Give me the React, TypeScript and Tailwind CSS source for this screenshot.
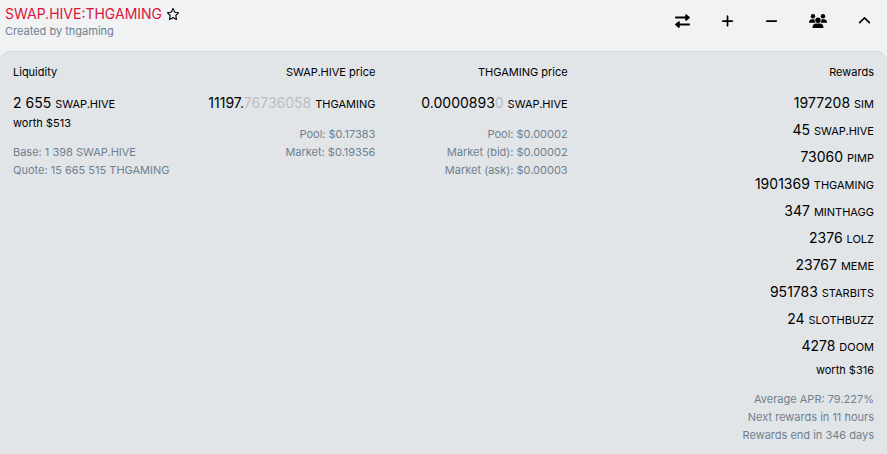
import type { ReactNode } from "react";
import { FaChevronUp, FaMinus, FaPlus, FaRegStar } from "react-icons/fa6";

interface Reward {
  amount: string;
  symbol: string;
}

const rewards: Reward[] = [
  { amount: "1977208", symbol: "SIM" },
  { amount: "45", symbol: "SWAP.HIVE" },
  { amount: "73060", symbol: "PIMP" },
  { amount: "1901369", symbol: "THGAMING" },
  { amount: "347", symbol: "MINTHAGG" },
  { amount: "2376", symbol: "LOLZ" },
  { amount: "23767", symbol: "MEME" },
  { amount: "951783", symbol: "STARBITS" },
  { amount: "24", symbol: "SLOTHBUZZ" },
  { amount: "4278", symbol: "DOOM" },
];

interface AmountProps {
  value: string;
  faded?: string;
  symbol: string;
}

function Amount({ value, faded, symbol }: AmountProps) {
  return (
    <div className="text-[14px] leading-[22px] whitespace-nowrap">
      {value}
      {faded && <span className="text-[#b9bfc5]">{faded}</span>}{" "}
      <span className="text-[11px] leading-none">{symbol}</span>
    </div>
  );
}

function Details({ lines }: { lines: string[] }) {
  return (
    <div className="mt-[11px] text-[#708090]">
      {lines.map((line) => (
        <p key={line}>{line}</p>
      ))}
    </div>
  );
}

function Column({ title, children }: { title: string; children: ReactNode }) {
  return (
    <section>
      <h2 className="mb-[11px]">{title}</h2>
      {children}
    </section>
  );
}

function IconButton({ label, children }: { label: string; children: ReactNode }) {
  return (
    <button type="button" aria-label={label} className="flex h-6 items-center">
      {children}
    </button>
  );
}

function SwapIcon() {
  return (
    <svg viewBox="0 0 15 14" className="h-[14px] w-[15px]" fill="currentColor" aria-hidden="true">
      <path d="M.8 2.5h9.4V1c0-.8.8-1.100 1.400-.6l3.100 2.600c.4.3.4.8 0 1.100l-3.100 2.600c-.6.5-1.400.1-1.400-.6V4.400H.8C.3 4.400 0 4 0 3.500s.3-1 .8-1z" />
      <path d="M14.200 9.500H4.800V8c0-.8-.8-1.100-1.400-.6L.3 10c-.4.3-.4.8 0 1.100l3.100 2.600c.6.5 1.400.1 1.400-.6v-1.700h9.400c.5 0 .8-.4.8-.9s-.3-1-.8-1z" />
    </svg>
  );
}

function UsersIcon() {
  return (
    <svg viewBox="0 0 18 14" className="h-[14px] w-[18px]" fill="currentColor" aria-hidden="true">
      <circle cx="4" cy="2.3" r="2.2" />
      <circle cx="14" cy="2.3" r="2.2" />
      <circle cx="9" cy="6.2" r="2.7" />
      <path d="M0 8.4C0 6.6 1.2 5.3 3 5.3h1.5c.4 0 .8.1 1.1.2-.2 1.3.2 2.3.9 3.2H.4c-.2 0-.4-.1-.4-.3z" />
      <path d="M18 8.4c0-1.8-1.2-3.1-3-3.1h-1.5c-.4 0-.8.1-1.1.2.2 1.3-.2 2.3-.9 3.2h6.1c.2 0 .4-.1.4-.3z" />
      <path d="M3.500 13.300c0-2.100 1.600-3.700 3.700-3.700h3.600c2.100 0 3.700 1.600 3.700 3.700 0 .4-.3.7-.7.7H4.200c-.4 0-.7-.3-.7-.7z" />
    </svg>
  );
}

export default function App() {
  return (
    <div className="flex min-h-screen flex-col bg-[#f0f2f4] font-['Inter',sans-serif] text-[11px] leading-[18px] text-black">
      <header className="flex items-start justify-between pt-1 pr-4 pb-3 pl-[5px]">
        <div>
          <div className="flex items-center gap-1">
            <a href="#pool" className="text-[14px] leading-[20px] text-[#dc143c]">
              SWAP.HIVE:THGAMING
            </a>
            <button type="button" aria-label="Add to favorites">
              <FaRegStar className="h-3 w-[14px]" />
            </button>
          </div>
          <p className="leading-[15px] text-[#708090]">Created by thgaming</p>
        </div>
        <div className="flex gap-[31px] pt-[5px]">
          <IconButton label="Swap">
            <SwapIcon />
          </IconButton>
          <IconButton label="Add liquidity">
            <FaPlus className="h-[14px] w-[13px]" />
          </IconButton>
          <IconButton label="Remove liquidity">
            <FaMinus className="h-[14px] w-[13px]" />
          </IconButton>
          <IconButton label="Liquidity providers">
            <UsersIcon />
          </IconButton>
          <IconButton label="Collapse">
            <FaChevronUp className="h-[14px] w-[13px]" />
          </IconButton>
        </div>
      </header>

      <main className="grid flex-1 grid-cols-[85fr_96fr_96fr_153fr] rounded-t-[10px] border-t border-[#d3d7da] bg-[#e1e5e8] px-[13px] pt-[11px] pb-2">
        <Column title="Liquidity">
          <Amount value="2 655" symbol="SWAP.HIVE" />
          <p>worth $513</p>
          <Details lines={["Base: 1 398 SWAP.HIVE", "Quote: 15 665 515 THGAMING"]} />
        </Column>
        <div className="text-right">
          <Column title="SWAP.HIVE price">
            <Amount value="11197." faded="76736058" symbol="THGAMING" />
            <Details lines={["Pool: $0.17383", "Market: $0.19356"]} />
          </Column>
        </div>
        <div className="text-right">
          <Column title="THGAMING price">
            <Amount value="0.0000893" faded="0" symbol="SWAP.HIVE" />
            <Details
              lines={["Pool: $0.00002", "Market (bid): $0.00002", "Market (ask): $0.00003"]}
            />
          </Column>
        </div>
        <div className="text-right">
          <Column title="Rewards">
            <ul className="mb-1 flex flex-col gap-[5px]">
              {rewards.map((reward) => (
                <li key={reward.symbol}>
                  <Amount value={reward.amount} symbol={reward.symbol} />
                </li>
              ))}
            </ul>
            <p>worth $316</p>
            <Details
              lines={["Average APR: 79.227%", "Next rewards in 11 hours", "Rewards end in 346 days"]}
            />
          </Column>
        </div>
      </main>
    </div>
  );
}
